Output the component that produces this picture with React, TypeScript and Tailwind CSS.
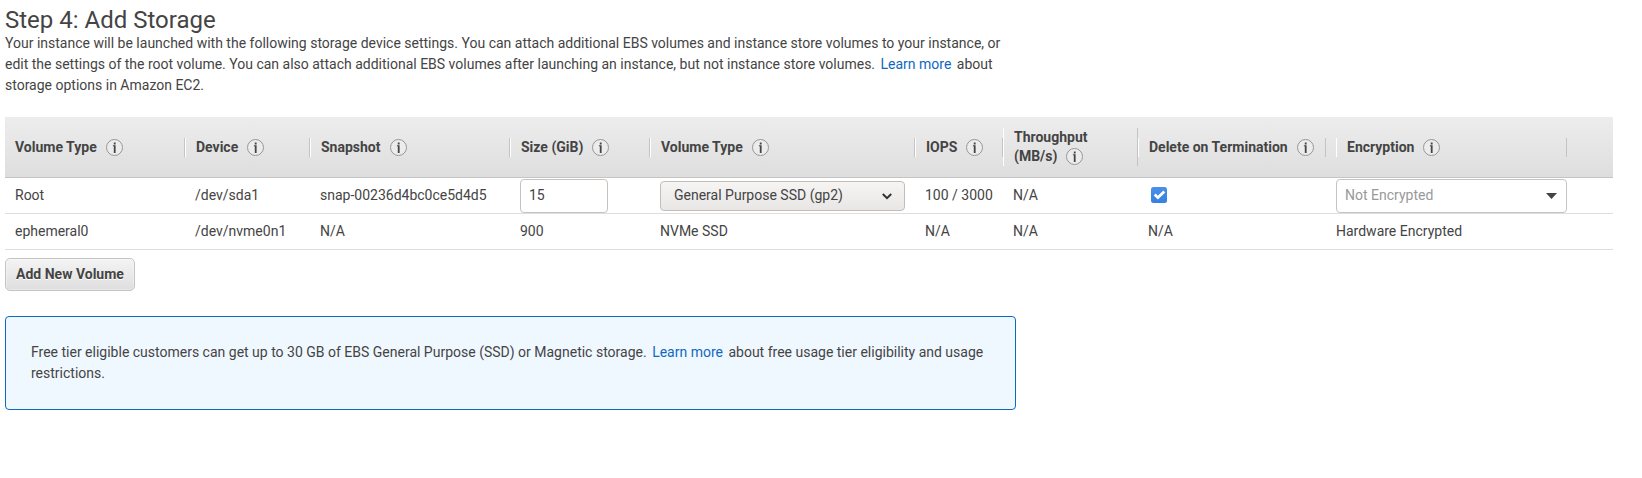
const grid =
  "grid grid-cols-[180px_125px_200px_140px_265px_88px_135px_188px_280px]";

function Info() {
  return (
    <svg className="inline-block size-[17px] shrink-0" viewBox="0 0 17 17" fill="none">
      <circle cx="8.5" cy="8.5" r="8" stroke="#969696" fill="#ececec" />
      <path d="M7.8 3.6h1.8v1.9H7.8zM6.9 6.3h2.7v7.6H7.8V7.2h-.9z" fill="#444" />
    </svg>
  );
}

function Divider() {
  return (
    <span className="mr-[9px] flex h-[19px]">
      <span className="w-px bg-[#c4c4c4]" />
      <span className="w-px bg-white" />
    </span>
  );
}

function Label({ text }: { text: string }) {
  return (
    <div className="flex items-center gap-[9px]">
      <span>{text}</span>
      <Info />
    </div>
  );
}

function Head({ text }: { text: string }) {
  return (
    <div className="flex items-center justify-between pl-px pt-px">
      <Label text={text} />
      <Divider />
    </div>
  );
}

function Learn() {
  return <a className="mx-[2px] text-[#1068c0]">Learn more</a>;
}

export default function App() {
  return (
    <main className="h-[478px] w-[1642px] overflow-hidden bg-white pl-[5px] pt-[5px] font-['Roboto',sans-serif] text-[14px] leading-[21px] text-[#444]">
      <h1 className="h-[28px] text-[24px] leading-[30px]">Step 4: Add Storage</h1>
      <p className="h-[84px] w-[1011px]">
        Your instance will be launched with the following storage device settings. You can attach additional EBS volumes and instance store volumes to your instance, or edit the settings of the root volume. You can also attach additional EBS volumes after launching an instance, but not instance store volumes. <Learn /> about storage options in Amazon EC2.
      </p>

      <section className="w-[1608px]">
        <div className={`${grid} h-[61px] border-b border-[#c4c4c4] bg-linear-to-b from-[#ededed] to-[#dedede] pl-[10px] font-bold`}>
          <div className="flex items-center justify-between pt-px">
            <Label text="Volume Type" />
            <Divider />
          </div>
          <Head text="Device" />
          <Head text="Snapshot" />
          <Head text="Size (GiB)" />
          <Head text="Volume Type" />
          <div className="flex items-center justify-between pl-px pt-px">
            <Label text="IOPS" />
            <div className="-mt-px mr-[9px] flex h-[38px]">
              <span className="mt-[10px] h-[19px] w-px bg-[#c4c4c4]" />
              <span className="w-px bg-white" />
            </div>
          </div>
          <div className="flex items-center justify-between pl-px pt-px">
            <div className="-mt-px leading-[19px]">
              <div>Throughput</div>
              <Label text="(MB/s)" />
            </div>
            <div className="-mt-px mr-[9px] flex h-[38px]">
              <span className="w-px bg-[#c4c4c4]" />
              <span className="mt-[10px] h-[19px] w-px bg-white" />
            </div>
          </div>
          <div className="flex items-center justify-between pl-px pr-[10px] pt-px">
            <Label text="Delete on Termination" />
            <span className="h-[19px] w-px bg-[#c4c4c4]" />
          </div>
          <div className="flex w-[231px] items-center justify-between pt-px">
            <div className="flex items-center gap-[10px]">
              <span className="h-[19px] w-px bg-white" />
              <Label text="Encryption" />
            </div>
            <span className="h-[19px] w-px bg-[#c4c4c4]" />
          </div>
        </div>

        <div className={`${grid} h-[36px] items-center border-b border-[#dedede] pl-[10px]`}>
          <span>Root</span>
          <span>/dev/sda1</span>
          <span>snap-00236d4bc0ce5d4d5</span>
          <div className="mt-px flex h-[34px] w-[88px] items-center rounded-[4px] border border-[#c8c2bd] bg-white pb-px pl-[8px]">15</div>
          <div className="mt-px flex h-[30px] w-[245px] items-center justify-between rounded-[4px] border border-[#c3bdb8] bg-linear-to-b from-[#f6f5f4] to-[#e9e7e5] pl-[13px] pr-[12px]">
            <span className="-mt-px">General Purpose SSD (gp2)</span>
            <svg width="10" height="7" viewBox="0 0 10 7" fill="none"><path d="M.8 1 5 5.2 9.2 1" stroke="#2e3436" strokeWidth="2" /></svg>
          </div>
          <span>100 / 3000</span>
          <span>N/A</span>
          <svg className="-mt-px ml-[3px] size-4" viewBox="0 0 16 16">
            <defs>
              <linearGradient id="check" x1="0" y1="0" x2="0" y2="1">
                <stop stopColor="#4a90e8" />
                <stop offset="1" stopColor="#3581e2" />
              </linearGradient>
            </defs>
            <rect width="16" height="16" rx="2.5" fill="url(#check)" />
            <path d="M3.7 7.5 6.9 10.6 13.3 4.6" fill="none" stroke="#fff" strokeWidth="2.7" />
          </svg>
          <div className="mt-px flex h-[34px] w-[231px] items-center justify-between rounded-[4px] border border-[#c4c4c4] pl-[8px] pr-[9px] text-[#999]">
            <span className="-mt-px">Not Encrypted</span>
            <svg width="11" height="6" viewBox="0 0 11 6"><path d="M0 0h11L5.5 6z" fill="#444" /></svg>
          </div>
        </div>

        <div className={`${grid} h-[36px] items-center border-b border-[#dedede] pl-[10px]`}>
          <span>ephemeral0</span>
          <span>/dev/nvme0n1</span>
          <span>N/A</span>
          <span>900</span>
          <span>NVMe SSD</span>
          <span>N/A</span>
          <span>N/A</span>
          <span>N/A</span>
          <span>Hardware Encrypted</span>
        </div>
      </section>

      <button className="mt-[8px] block h-[33px] w-[130px] rounded-[5px] border border-[#c4c4c4] bg-linear-to-b from-[#f4f4f4] to-[#dedede] text-center font-bold shadow-[inset_0_0_0_1px_rgba(255,255,255,0.3)] [text-shadow:0_1px_0_#fff]">
        Add New Volume
      </button>

      <aside className="mt-[25px] h-[94px] w-[1011px] rounded-[4px] border border-[#1068c0] bg-[#f0f8ff] px-[25px] pt-[25px]">
        Free tier eligible customers can get up to 30 GB of EBS General Purpose (SSD) or Magnetic storage. <Learn /> about free usage tier eligibility and usage restrictions.
      </aside>
    </main>
  );
}
